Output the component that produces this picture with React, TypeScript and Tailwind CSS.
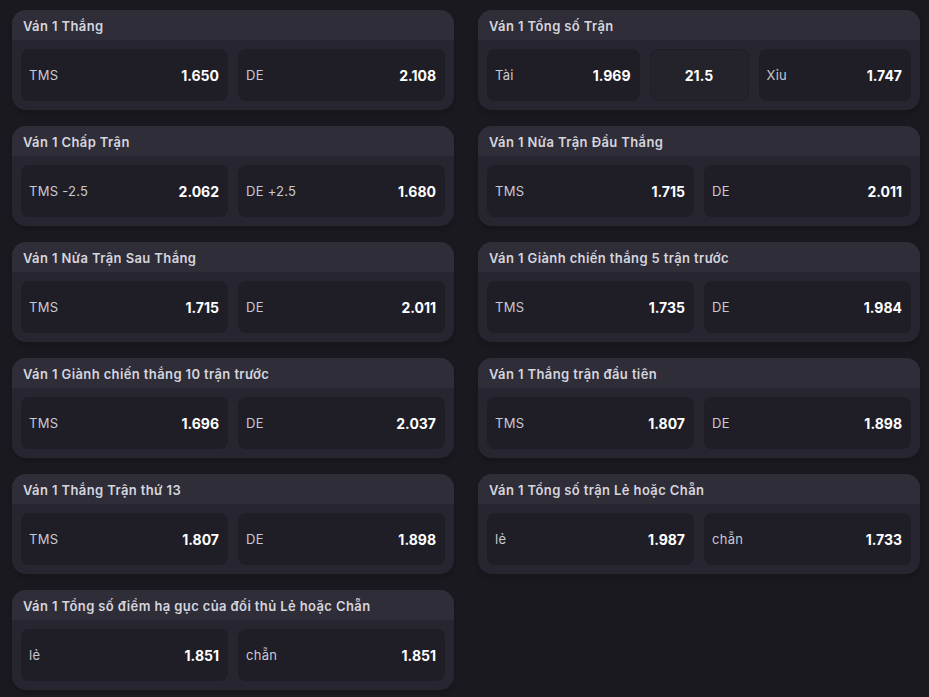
type Odd = { label: string; value: string };

type Market = { title: string; left: Odd; right: Odd; line?: string };

const markets: Market[] = [
  { title: "Ván 1 Thắng", left: { label: "TMS", value: "1.650" }, right: { label: "DE", value: "2.108" } },
  { title: "Ván 1 Tổng số Trận", left: { label: "Tài", value: "1.969" }, right: { label: "Xỉu", value: "1.747" }, line: "21.5" },
  { title: "Ván 1 Chấp Trận", left: { label: "TMS -2.5", value: "2.062" }, right: { label: "DE +2.5", value: "1.680" } },
  { title: "Ván 1 Nửa Trận Đầu Thắng", left: { label: "TMS", value: "1.715" }, right: { label: "DE", value: "2.011" } },
  { title: "Ván 1 Nửa Trận Sau Thắng", left: { label: "TMS", value: "1.715" }, right: { label: "DE", value: "2.011" } },
  { title: "Ván 1 Giành chiến thắng 5 trận trước", left: { label: "TMS", value: "1.735" }, right: { label: "DE", value: "1.984" } },
  { title: "Ván 1 Giành chiến thắng 10 trận trước", left: { label: "TMS", value: "1.696" }, right: { label: "DE", value: "2.037" } },
  { title: "Ván 1 Thắng trận đầu tiên", left: { label: "TMS", value: "1.807" }, right: { label: "DE", value: "1.898" } },
  { title: "Ván 1 Thắng Trận thứ 13", left: { label: "TMS", value: "1.807" }, right: { label: "DE", value: "1.898" } },
  { title: "Ván 1 Tổng số trận Lẻ hoặc Chẵn", left: { label: "lẻ", value: "1.987" }, right: { label: "chẵn", value: "1.733" } },
  { title: "Ván 1 Tổng số điểm hạ gục của đối thủ Lẻ hoặc Chẵn", left: { label: "lẻ", value: "1.851" }, right: { label: "chẵn", value: "1.851" } },
];

const OddCell = ({ odd }: { odd: Odd }) => (
  <div className="flex-1 h-[52px] rounded-lg bg-[#1f1e26] flex items-center justify-between pl-2 pr-[9px]">
    <span className="text-[13px] leading-5 tracking-[0.02em] text-[#c9c8d2]">{odd.label}</span>
    <span className="text-[14px] leading-5 font-bold text-white pt-px">{odd.value}</span>
  </div>
);

const MarketCard = ({ m }: { m: Market }) => (
  <div className="rounded-[14px] bg-[#272630] overflow-hidden shadow-md">
    <div className="h-[30px] bg-[#2e2d38] flex items-center px-[11px] pt-[2px]">
      <span className="text-[13px] leading-5 font-semibold tracking-[0.03em] text-[#d6d5de]">{m.title}</span>
    </div>
    <div className="flex gap-[10px] px-[9px] pt-[9px] pb-[9px]">
      <OddCell odd={m.left} />
      {m.line && (
        <div className="w-[99px] h-[52px] rounded-lg bg-[#24232c] border border-[#201f27] flex items-center justify-center">
          <span className="text-[14px] leading-5 font-bold text-white pt-px">{m.line}</span>
        </div>
      )}
      <OddCell odd={m.right} />
    </div>
  </div>
);

export default function App() {
  return (
    <div className="min-h-[697px] bg-[#1a1920] pl-3 pr-[9px] pt-[10px] pb-4" style={{ fontFamily: "Inter, 'Noto Sans', sans-serif" }}>
      <div className="grid grid-cols-2 gap-x-6 gap-y-4">
        {markets.map((m, i) => (
          <MarketCard m={m} key={i} />
        ))}
      </div>
    </div>
  );
}
